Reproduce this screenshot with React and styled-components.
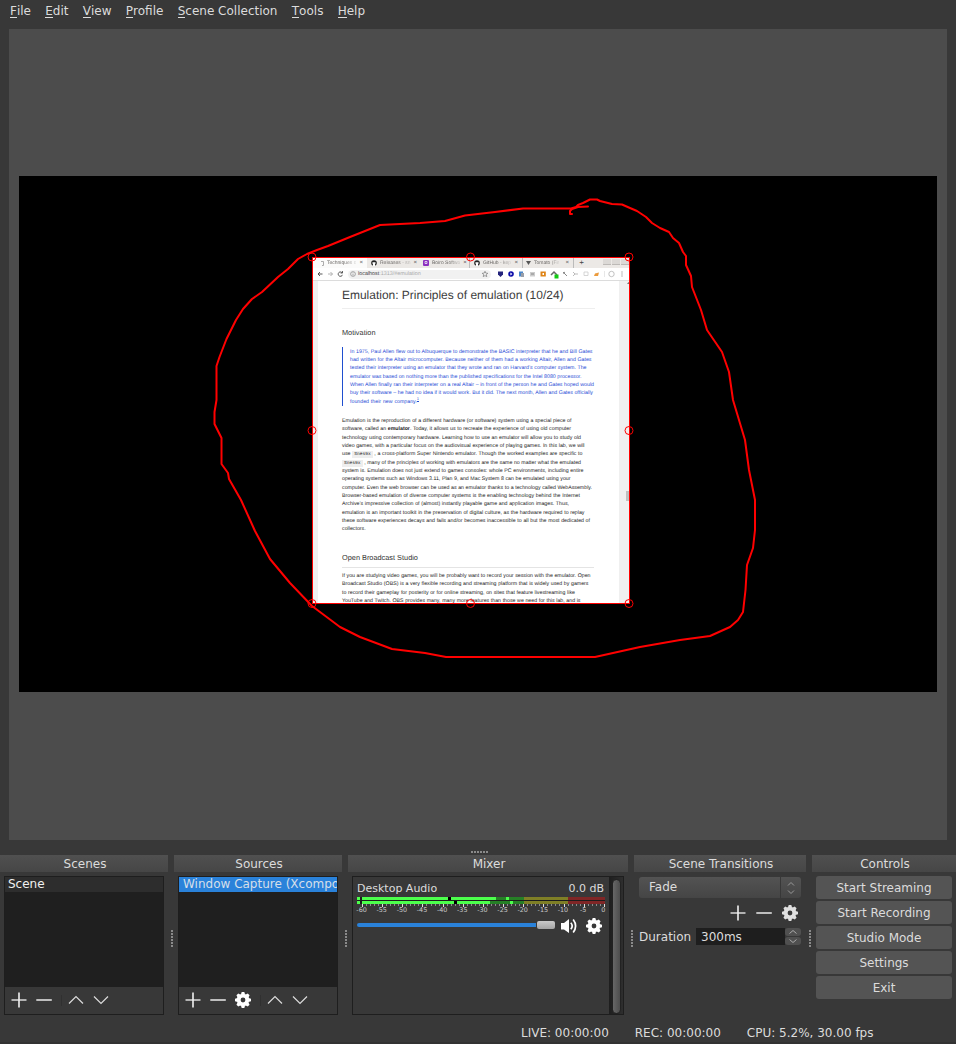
import React from 'react';
import styled, { createGlobalStyle, css } from 'styled-components';

const Global = createGlobalStyle`
  body { margin: 0; background: #383838; }
  * { box-sizing: border-box; }
`;

const Window = styled.div`
  width: 956px;
  height: 1044px;
  overflow: hidden;
  display: flex;
  flex-direction: column;
  background: #383838;
  color: #dcdcdc;
  font: 12px/16px 'DejaVu Sans', sans-serif;
  white-space: nowrap;
  border-bottom: 2px solid #323232;
`;

const MenuBar = styled.nav`
  display: flex;
  flex: none;
  height: 29px;
  padding: 3px 0 0 10px;
  gap: 14.3px;
`;
const MenuKey = styled.span`
  display: inline-block;
  height: 15px;
  border-bottom: 1px solid #dcdcdc;
`;

/* ---------- preview ---------- */
const Preview = styled.main`
  position: relative;
  flex: none;
  height: 811px;
  margin: 0 9px;
  padding: 147px 10px 0;
  background: #4c4c4c;
`;
const Canvas = styled.div`
  position: relative;
  height: 516px;
  background: #000;
`;
const Capture = styled.div`
  position: absolute;
  left: 294px;
  top: 82px;
  width: 317px;
  height: 346px;
  overflow: hidden;
  background: #fff;
  font-family: 'Liberation Sans', sans-serif;
  text-rendering: geometricPrecision;
  color: #1c1c1c;
`;
const Overlay = styled.svg`
  position: absolute;
  left: -19px;
  top: -176px;
  pointer-events: none;
`;
const TabStrip = styled.div`
  display: flex;
  height: 10px;
  background: #ece9e6;
  font-size: 5px;
  line-height: 10px;
`;
const Tab = styled.div`
  display: flex;
  align-items: center;
  gap: 3px;
  width: ${p => p.$w}px;
  padding: 0 4px 0 ${p => p.$pad || 6}px;
  background: ${p => (p.$active ? '#fbfbfa' : 'transparent')};
  border-right: ${p => (p.$sep ? '1px solid #bbb' : '0')};
  svg { flex: none; }
`;
const TabTitle = styled.span`
  color: #6d6a68;
  mask-image: linear-gradient(90deg, #000 60%, rgba(0, 0, 0, .2));
`;
const Close = styled.span`
  margin-left: auto;
  color: #444;
  font-size: ${p => p.$size || 6}px;
`;
const WindowButtons = styled.div`
  display: flex;
  gap: 1px;
  margin-left: auto;
  padding: 1px 1px 0 0;
  i { width: 8px; height: 6px; background: #dcd9d6; border-bottom: 1px solid #bdbab7; }
`;
const AddressBar = styled.div`
  display: flex;
  align-items: center;
  height: 13px;
  padding-left: 4px;
  border-bottom: 1px solid #dcdcdc;
`;
const UrlPill = styled.div`
  display: flex;
  align-items: center;
  width: 143px;
  height: 9px;
  margin-left: 5px;
  padding: 0 3px 0 2px;
  gap: 2px;
  border-radius: 5px;
  background: #f1f1f1;
  font-size: 5.4px;
  line-height: 9px;
  color: #aaa;
  b { font-weight: 400; color: #444; }
  svg:last-child { margin-left: auto; }
`;
const Extensions = styled.svg`
  flex: none;
  margin-left: 5px;
`;
const PageBody = styled.div`
  display: flex;
  height: 323px;
`;
const SideStrip = styled.div`
  width: 5px;
  background: #f0f0f0;
`;
const PageScroll = styled.div`
  width: 11px;
  padding: 1px 0 0 7px;
  background: #f0f0f0;
  &::before { content: ''; display: block; width: 3px; height: 2px; margin-left: 1px; background: #777; clip-path: polygon(50% 0, 100% 100%, 0 100%); }
  &::after { content: ''; display: block; width: 4px; height: 10px; margin-top: 207px; background: #c1c1c1; }
`;
const Article = styled.article`
  flex: 1;
  padding: 0 24px;
  overflow: hidden;
`;
const Title = styled.h1`
  margin: 0;
  height: 28px;
  padding-top: 7px;
  border-bottom: 1px solid #eee;
  font: 400 11.97px/14px 'Liberation Sans', sans-serif;
  color: #3c3c3c;
`;
const Heading = styled.h2`
  margin: 0;
  width: 252px;
  padding-top: ${p => p.$top}px;
  height: ${p => p.$h}px;
  border-bottom: ${p => (p.$rule ? '1px solid #e4e4e4' : '0')};
  font: 400 7.35px/10px 'Liberation Sans', sans-serif;
  color: #333;
`;
const Quote = styled.blockquote`
  margin: 0;
  height: 59px;
  padding: .8px 0 0 7px;
  border-left: 1px solid #1f4fcf;
  color: #1f4cd6;
`;
const Text = styled.div`
  padding-top: ${p => p.$top || 0}px;
`;
const Line = styled.div`
  width: ${p => p.$w}px;
  height: 8.33px;
  font-size: 5.26px;
  line-height: 8.33px;
  text-align: justify;
  text-align-last: justify;
  sup { font-size: 4px; line-height: 0; text-decoration: underline; }
  code { font: 4.6px/6px 'Liberation Mono', monospace; background: #eee; padding: 1px 2px; }
`;

/* ---------- docks ---------- */
const Splitter = styled.div`
  flex: none;
  height: 15px;
  padding: 11px 0 0 471px;
`;
const Dots = styled.div`
  width: ${p => (p.$vertical ? 2 : 18)}px;
  height: ${p => (p.$vertical ? 18 : 2)}px;
  background: repeating-linear-gradient(${p => (p.$vertical ? '180deg' : '90deg')}, #8a8a8a 0 2px, transparent 2px 3px);
`;
const Docks = styled.section`
  display: flex;
  flex: none;
  height: 166px;
`;
const Gutter = styled.div`
  width: 6px;
  padding: 75px 0 0 3px;
`;
const Dock = styled.div`
  width: ${p => p.$w}px;
`;
const DockTitle = styled.header`
  height: 17px;
  margin-bottom: 4px;
  padding: 1px 0 0 2px;
  line-height: 17px;
  text-align: center;
  background: linear-gradient(#505050, #464646);
`;
const ListFrame = styled.div`
  width: 160px;
  height: 139px;
  margin-left: 4px;
  border: 1px solid #1e1e1e;
  background: #1f1f1f;
  display: flex;
  flex-direction: column;
`;
const ListRow = styled.div`
  height: 15px;
  line-height: 15px;
  padding-left: 3px;
  overflow: hidden;
  color: #f0f0f0;
  background: #2d2d2d;
  ${p => p.$selected && css`
    padding-left: 4px;
    color: #d5dfe9;
    background: #2a82da;
  `}
`;
const Toolbar = styled.div`
  display: flex;
  align-items: center;
  height: 27px;
  margin-top: auto;
  padding: 0 0 1px 6px;
  gap: 9px;
  background: #383838;
`;
const ToolSep = styled.i`
  width: 1px;
  height: 11px;
  background: #303030;
  margin-right: -3px;
`;

/* ---------- mixer ---------- */
const MixerFrame = styled.div`
  display: flex;
  width: 272px;
  height: 139px;
  margin-left: 4px;
  border: 1px solid #1e1e1e;
`;
const Channel = styled.div`
  width: 256px;
  padding: 3px 4px 0 4px;
`;
const ChannelHead = styled.div`
  display: flex;
  justify-content: space-between;
  height: 17px;
  padding: .6px 1px 0 0;
  font-size: 11px;
`;
const Meter = styled.svg`
  display: block;
`;
const Scale = styled.div`
  display: grid;
  grid-template-columns: repeat(13, 20.15px);
  height: 9px;
  margin: -1px 0 0 -5.5px;
  font-size: 6.4px;
  line-height: 9px;
  text-align: center;
  color: #c8c8c8;
`;
const VolumeRow = styled.div`
  display: flex;
  align-items: center;
  height: 18px;
  margin-top: 2px;
`;
const Slider = styled.div`
  display: flex;
  align-items: center;
  width: 198px;
  margin: 0 6px 2px 0;
  &::before { content: ''; width: 179px; height: 4px; border-radius: 2px 0 0 2px; background: #2a82da; }
  &::after { content: ''; width: 18px; height: 8px; margin-left: 1px; border-radius: 2px; background: linear-gradient(#cacaca, #a4a4a4); }
`;
const Speaker = styled.svg`
  margin-right: 8px;
`;
const MixerScroll = styled.div`
  width: 14px;
  padding: 2px 2px 2px 3px;
  background: linear-gradient(90deg, #1e1e1e, #2e2e2e);
  &::before { content: ''; display: block; height: 133px; border: 1px solid #222; border-radius: 5px; background: linear-gradient(90deg, #676767, #4d4d4d); }
`;

/* ---------- transitions and controls ---------- */
const Combo = styled.div`
  display: flex;
  width: 162px;
  height: 21px;
  margin: 5px 0 0 5px;
  padding-left: 10px;
  line-height: 21px;
  border-radius: 3px;
  background: linear-gradient(#535353, #454545);
`;
const ComboArrows = styled.div`
  display: flex;
  align-items: center;
  justify-content: center;
  width: 21px;
  margin-left: auto;
  border-left: 1px solid #383838;
`;
const TransitionTools = styled.div`
  display: flex;
  justify-content: flex-end;
  gap: 10px;
  height: 30px;
  padding: 7px 8px 0 0;
`;
const DurationRow = styled.div`
  display: flex;
  align-items: center;
  height: 17px;
  padding-left: 5px;
`;
const DurationInput = styled.div`
  width: 89px;
  height: 17px;
  margin-left: auto;
  padding: 1px 0 0 5px;
  line-height: 17px;
  background: #1e1e1e;
`;
const Spin = styled.div`
  display: flex;
  flex-direction: column;
  gap: 1px;
  width: 16px;
  margin-right: 5px;
  svg { display: block; background: #505050; border-radius: 3px; }
`;
const Buttons = styled.div`
  display: flex;
  flex-direction: column;
  gap: 2px;
  padding-left: 4px;
`;
const Button = styled.button`
  width: 136px;
  height: 23px;
  padding: 0;
  border: 0;
  border-radius: 3px;
  background: #545454;
  color: inherit;
  font: inherit;
`;
const StatusBar = styled.footer`
  display: flex;
  padding: 4px 0 0 521px;
  gap: 26px;
`;

const Plus = () => (
  <svg width="16" height="16"><path d="M.5 8h15" stroke="#d0d0d0" strokeWidth="1.6" /><path d="M8 .5v15" stroke="#f2f2f2" strokeWidth="1.6" /></svg>
);
const Minus = () => (
  <svg width="16" height="16"><path d="M.3 8h15.500" stroke="#cfcfcf" strokeWidth="1.8" /></svg>
);
const Chevron = ({ down }) => (
  <svg width="16" height="16"><path d={down ? 'M1 4.500l7 7 7-7' : 'M1 11.500l7-7 7 7'} fill="none" stroke="#dcdcdc" strokeWidth="1.2" /></svg>
);
const Gear = ({ color = '#fff' }) => (
  <svg width="16" height="16" viewBox="-8 -8 16 16">
    <circle r="4.3" fill="none" stroke={color} strokeWidth="3.8" />
    {[0, 45, 90, 135, 180, 225, 270, 315].map(a => (
      <path key={a} d="M-2.1 -5.4L-1.3 -8H1.3L2.1 -5.4z" fill={color} transform={`rotate(${a})`} />
    ))}
  </svg>
);

const quote = [
  [242.5, 'In 1975, Paul Allen flew out to Albuquerque to demonstrate the BASIC interpreter that he and Bill Gates'],
  [241.5, 'had written for the Altair microcomputer. Because neither of them had a working Altair, Allen and Gates'],
  [236.5, 'tested their interpreter using an emulator that they wrote and ran on Harvard’s computer system. The'],
  [231.5, 'emulator was based on nothing more than the published specifications for the Intel 8080 processor.'],
  [244, 'When Allen finally ran their interpreter on a real Altair – in front of the person he and Gates hoped would'],
  [243, 'buy their software – he had no idea if it would work. But it did. The next month, Allen and Gates officially'],
  [69, <>founded their new company.<sup>1</sup></>],
];
const body = [
  [229.5, 'Emulation is the reproduction of a different hardware (or software) system using a special piece of'],
  [229, <>software, called an <b>emulator</b>. Today, it allows us to recreate the experience of using old computer</>],
  [239, 'technology using contemporary hardware. Learning how to use an emulator will allow you to study old'],
  [242.5, 'video games, with a particular focus on the audiovisual experience of playing games. In this lab, we will'],
  [240.5, <>use <code>Snes9x</code> , a cross-platform Super Nintendo emulator. Though the worked examples are specific to</>],
  [239, <><code>Snes9x</code> , many of the principles of working with emulators are the same no matter what the emulated</>],
  [241.5, 'system is. Emulation does not just extend to games consoles: whole PC environments, including entire'],
  [228.5, 'operating systems such as Windows 3.11, Plan 9, and Mac System 8 can be emulated using your'],
  [250, 'computer. Even the web browser can be used as an emulator thanks to a technology called WebAssembly.'],
  [238, 'Browser-based emulation of diverse computer systems is the enabling technology behind the Internet'],
  [227, 'Archive’s impressive collection of (almost) instantly playable game and application images. Thus,'],
  [242.5, 'emulation is an important toolkit in the preservation of digital culture, as the hardware required to replay'],
  [248, 'these software experiences decays and fails and/or becomes inaccessible to all but the most dedicated of'],
  [24, 'collectors.'],
];
const studio = [
  [248.5, 'If you are studying video games, you will be probably want to record your session with the emulator. Open'],
  [246.5, 'Broadcast Studio (OBS) is a very flexible recording and streaming platform that is widely used by gamers'],
  [233, 'to record their gameplay for posterity or for online streaming, on sites that feature livestreaming like'],
  [238.5, 'YouTube and Twitch. OBS provides many, many more features than those we need for this lab, and is'],
];
const renderLines = lines => lines.map(([w, t], i) => <Line key={i} $w={w}>{t}</Line>);

const handles = [[312, 257], [470.5, 257], [629, 257], [312, 430.5], [629, 430.5], [312, 603.5], [470.5, 603.5], [629, 603.5]];

const Octo = () => (
  <svg width="6" height="6"><circle cx="3" cy="3" r="2.8" fill="#222" /><path d="M2 6V4.4Q1.2 3.6 1.6 2L2.4 2.3H3.6L4.4 2Q4.8 3.6 4 4.4V6z" fill="#fff" /></svg>
);

const menus = ['File', 'Edit', 'View', 'Profile', 'Scene Collection', 'Tools', 'Help'];
const levels = [
  { y: 0, hold: 91, level: 139, peak: 149 },
  { y: 4, hold: 97, level: 133, peak: 153 },
];

export default function App() {
  return (
    <Window>
      <Global />
      <MenuBar>
        {menus.map(m => <span key={m}><MenuKey>{m[0]}</MenuKey>{m.slice(1)}</span>)}
      </MenuBar>
      <Preview>
        <Canvas>
          <Capture>
            <TabStrip>
              <Tab $w={54} $active $pad={8}>
                <svg width="3" height="5"><path d="M0 .5H2.5V4.5H1" fill="none" stroke="#999" strokeWidth=".8" /></svg>
                <TabTitle>Techniques o</TabTitle><Close>×</Close>
              </Tab>
              <Tab $w={52} $pad={4}><Octo /><TabTitle>Releases - sn</TabTitle><Close>×</Close></Tab>
              <Tab $w={51} $sep $pad={4}>
                <svg width="6" height="6"><rect width="6" height="6" rx="1" fill="#8b2fc0" /><path d="M2 1.5h2v2H2z" fill="none" stroke="#fff" strokeWidth=".7" /></svg>
                <TabTitle>Boiro Softwa</TabTitle><Close>×</Close>
              </Tab>
              <Tab $w={53} $sep $pad={4}><Octo /><TabTitle>GitHub - kep</TabTitle><Close>×</Close></Tab>
              <Tab $w={51} $sep $pad={3}>
                <svg width="5" height="6"><path d="M0 1h5L2.500 5z" fill="#555" /></svg>
                <TabTitle>Tomato (Fir</TabTitle><Close>×</Close>
              </Tab>
              <Tab $w={14} $pad={4}><Close $size={8}>+</Close></Tab>
              <WindowButtons><i /><i /><i /></WindowButtons>
            </TabStrip>
            <AddressBar>
              <svg width="26" height="8" fill="none">
                <path d="M5.500 4H1M3 2L1 4l2 2" stroke="#444" strokeWidth=".9" />
                <path d="M11 4h4.500M13.500 2l2 2-2 2" stroke="#aaa" strokeWidth=".9" />
                <path d="M25.300 3A2.200 2.200 0 1 0 25.500 4.800M25.600 1v2h-2" stroke="#444" strokeWidth=".9" />
              </svg>
              <UrlPill>
                <svg width="6" height="6"><circle cx="3" cy="3" r="2.400" fill="none" stroke="#777" strokeWidth=".6" /><path d="M3 2.600v2M3 1.400v.6" stroke="#777" strokeWidth=".6" /></svg>
                <span><b>localhost</b>:1313/#emulation</span>
                <svg width="6" height="6"><path d="M3 .3l.8 1.800 2 .2-1.500 1.300.5 2L3 4.600 1.200 5.600l.5-2L.2 2.300l2-.2z" fill="none" stroke="#666" strokeWidth=".6" /></svg>
              </UrlPill>
              <Extensions width="130" height="10" viewBox="0 0 130 10">
                <path d="M2 2.500h5v3L4.500 8 2 5.500z" fill="#24247c" />
                <circle cx="15" cy="5" r="2.800" fill="#0b0ba8" /><path d="M14.400 3.600v2.800l2-1.400z" fill="#fff" />
                <path d="M23 2.500h4v5h-4z" fill="#4b86c9" /><path d="M25 4h3v4h-3z" fill="#9a9fa8" />
                <path d="M34 3h5v4.500h-5z" fill="#ccc" /><path d="M35 5h3" stroke="#888" />
                <path d="M44.500 2.500h5.300v5h-5.300z" fill="#de8417" /><path d="M46.500 4h1.500v2h-1.500z" fill="#fff" />
                <path d="M55 6l3-3 3 3" stroke="#666" strokeWidth="1.500" fill="none" /><path d="M58.500 5.500h4v4h-4z" fill="#12c912" />
                <path d="M67 3l4 4M67 4.500l2-1.500" stroke="#888" strokeWidth="1" />
                <path d="M77 3l2 2-2 2M79 5h3" stroke="#aaa" strokeWidth=".8" fill="none" />
                <path d="M88 3h4v3.500h-4z" stroke="#ccc" strokeWidth=".8" fill="none" />
                <path d="M98 7l1-2.500 4-1-1 3.500z" fill="#eb9b3d" />
                <path d="M108.500 2v6" stroke="#ddd" strokeWidth=".7" />
                <circle cx="115.500" cy="5" r="2.700" fill="none" stroke="#bbb" strokeWidth=".9" />
                <path d="M126 2.500v1M126 4.500v1M126 6.500v1" stroke="#777" strokeWidth="1" />
              </Extensions>
            </AddressBar>
            <PageBody>
              <SideStrip />
              <Article>
                <Title>Emulation: Principles of emulation (10/24)</Title>
                <Heading $top={19} $h={38}>Motivation</Heading>
                <Quote>{renderLines(quote)}</Quote>
                <Text $top={11}>{renderLines(body)}</Text>
                <Heading $top={19} $h={34} $rule>Open Broadcast Studio</Heading>
                <Text $top={4.500}>{renderLines(studio)}</Text>
              </Article>
              <PageScroll />
            </PageBody>
          </Capture>
          <Overlay width="956" height="700" fill="none" stroke="#f00">
            <rect x="312.500" y="257.500" width="317" height="346" />
            {handles.map(([x, y]) => <circle key={`${x},${y}`} cx={x} cy={y} r="4" />)}
            <path
              strokeWidth="2" strokeLinejoin="round" strokeLinecap="round"
              d="M588 206.500L578 207 572 209 570 211 570 214 572 214M576 207L571 208.500H523L495 212 465 215.500 445 221 420 223 380 225 350 237 328 246 317 250 307 254 298 259 288 269 278 277 262 292 252 299 243 309 236 320 226.500 339 219.500 357 216.500 366V400L214.500 412V424L221.500 438V464L228 473 229 479 241 500 255 531 270 559 290 583 312 606 340 627 360 637 392 649 425 653 446 657H595L640 647 680 640 710 636 730 627 738 620 743 612 745.500 590 747 565 753 548 755 530 755 500 749 470 745 440 733 400 729 372 722 352 707 330 701 310 692 287 691 276 686 265V256L683 252 679 243 673 238 669 232 660 228 652 223 646 217 637 211 630 208 622 204.500 612 204 600 201 597 199.500H590L583 203 578 205 576 207"
            />
          </Overlay>
        </Canvas>
      </Preview>
      <Splitter><Dots /></Splitter>
      <Docks>
        <Dock $w={168}>
          <DockTitle>Scenes</DockTitle>
          <ListFrame>
            <ListRow>Scene</ListRow>
            <Toolbar><Plus /><Minus /><ToolSep /><Chevron /><Chevron down /></Toolbar>
          </ListFrame>
        </Dock>
        <Gutter><Dots $vertical /></Gutter>
        <Dock $w={168}>
          <DockTitle>Sources</DockTitle>
          <ListFrame>
            <ListRow $selected>Window Capture (Xcomposite)</ListRow>
            <Toolbar><Plus /><Minus /><Gear /><ToolSep /><Chevron /><Chevron down /></Toolbar>
          </ListFrame>
        </Dock>
        <Gutter><Dots $vertical /></Gutter>
        <Dock $w={280}>
          <DockTitle>Mixer</DockTitle>
          <MixerFrame>
            <Channel>
              <ChannelHead><span>Desktop Audio</span><span>0.0 dB</span></ChannelHead>
              <Meter width="248" height="10" shapeRendering="crispEdges">
                <path d="M0 3h248v1H0zM3 0h2v7H3z" fill="#1c1c1c" />
                {levels.map(({ y, hold, level, peak }) => (
                  <g key={y}>
                    <rect x="0" y={y} width="3" height="3" fill="#4cff4c" />
                    <rect x="5" y={y} width="162" height="3" fill="#267f26" />
                    <rect x="5" y={y} width={level - 5} height="3" fill="#4cff4c" />
                    <rect x={hold} y={y} width="3" height="3" fill="#000" />
                    <rect x={peak} y={y} width="3" height="3" fill="#4cff4c" />
                    <rect x="167" y={y} width="44" height="3" fill="#7f7f26" />
                    <rect x="211" y={y} width="37" height="3" fill="#7f2626" />
                  </g>
                ))}
                {Array.from({ length: 61 }, (_, i) => (
                  <rect key={i} x={Math.round(5 + i * 4.030)} y="7" width="1" height={i % 5 ? 2 : 3} fill={i % 5 ? '#8c8c8c' : '#e0e0e0'} />
                ))}
              </Meter>
              <Scale>
                {[-60, -55, -50, -45, -40, -35, -30, -25, -20, -15, -10, -5, 0].map(n => <span key={n}>{n}</span>)}
              </Scale>
              <VolumeRow>
                <Slider />
                <Speaker width="17" height="16" fill="none">
                  <path d="M0 5h3L8 1v14L3 11.500H0z" fill="#fff" />
                  <path d="M9.800 4.800q2.800 3.200 0 6.400M12.200 1.500q4.800 6.500 0 13" stroke="#fff" strokeWidth="1.700" />
                </Speaker>
                <Gear />
              </VolumeRow>
            </Channel>
            <MixerScroll />
          </MixerFrame>
        </Dock>
        <Gutter><Dots $vertical /></Gutter>
        <Dock $w={172}>
          <DockTitle>Scene Transitions</DockTitle>
          <Combo>
            Fade
            <ComboArrows>
              <svg width="8" height="14" fill="none" stroke="#999"><path d="M1 4.500l3-3 3 3M1 9.500l3 3 3-3" /></svg>
            </ComboArrows>
          </Combo>
          <TransitionTools><Plus /><Minus /><Gear color="#e0e0e0" /></TransitionTools>
          <DurationRow>
            Duration
            <DurationInput>300ms</DurationInput>
            <Spin>
              <svg width="16" height="8" fill="none" stroke="#aaa"><path d="M4.500 5.500l3.500-3 3.500 3" /></svg>
              <svg width="16" height="8" fill="none" stroke="#aaa"><path d="M4.500 2.500l3.500 3 3.500-3" /></svg>
            </Spin>
          </DurationRow>
        </Dock>
        <Gutter><Dots $vertical /></Gutter>
        <Dock $w={144}>
          <DockTitle>Controls</DockTitle>
          <Buttons>
            {['Start Streaming', 'Start Recording', 'Studio Mode', 'Settings', 'Exit'].map(b => <Button key={b}>{b}</Button>)}
          </Buttons>
        </Dock>
      </Docks>
      <StatusBar>
        <span>LIVE: 00:00:00</span><span>REC: 00:00:00</span><span>CPU: 5.2%, 30.00 fps</span>
      </StatusBar>
    </Window>
  );
}
